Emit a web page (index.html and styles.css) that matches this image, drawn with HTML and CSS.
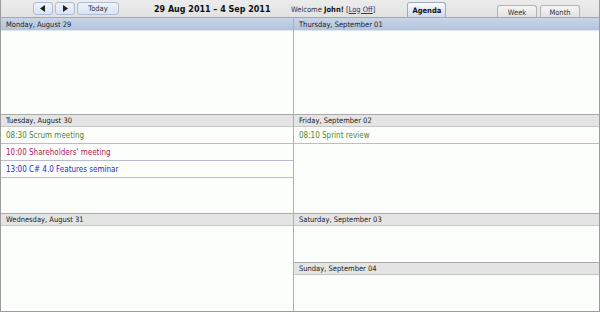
FILE: index.html
```html
<!DOCTYPE html>
<html>
<head>
<meta charset="utf-8">
<link rel="stylesheet" href="styles.css">
</head>
<body>
<div class="cal">
  <div class="toolbar">
    <div class="navs">
      <span class="btn arrow"><svg width="6" height="7" viewBox="0 0 6 7"><path d="M5 0 L0 3.5 L5 7 Z" fill="#222"/></svg></span>
      <span class="btn arrow"><svg width="6" height="7" viewBox="0 0 6 7"><path d="M1 0 L6 3.5 L1 7 Z" fill="#222"/></svg></span>
      <span class="btn today">Today</span>
    </div>
    <div class="range">29 Aug 2011 – 4 Sep 2011</div>
    <div class="welcome">Welcome <b>John!</b> [<a href="#">Log Off</a>]</div>
    <div class="tab active">Agenda</div>
    <div class="views">
      <div class="tab">Week</div>
      <div class="tab">Month</div>
    </div>
  </div>
  <div class="grid">
    <div class="day left first">
      <div class="dh blue">Monday, August 29</div>
    </div>
    <div class="day first">
      <div class="dh blue">Thursday, September 01</div>
    </div>
    <div class="day left">
      <div class="dh">Tuesday, August 30</div>
      <div class="ev green">08:30 Scrum meeting</div>
      <div class="ev red">10:00 Shareholders' meeting</div>
      <div class="ev blue-t">13:00 C# 4.0 Features seminar</div>
    </div>
    <div class="day">
      <div class="dh">Friday, September 02</div>
      <div class="ev green">08:10 Sprint review</div>
    </div>
    <div class="day left">
      <div class="dh">Wednesday, August 31</div>
    </div>
    <div class="stack">
      <div class="day half">
        <div class="dh">Saturday, September 03</div>
      </div>
      <div class="day half">
        <div class="dh">Sunday, September 04</div>
      </div>
    </div>
  </div>
</div>
</body>
</html>
```

FILE: styles.css
```css
* { box-sizing: border-box; }
html, body { margin: 0; padding: 0; background: #fff; }
body {
  font-family: "DejaVu Sans Condensed", "DejaVu Sans", sans-serif;
  font-size: 7.5px;
  color: #222;
}
.cal {
  width: 600px;
  height: 312px;
  border: 1px solid #9c9c9c;
  border-top: none;
  display: flex;
  flex-direction: column;
  background: #fcfefc;
}
.toolbar {
  height: 17px;
  flex: none;
  background: linear-gradient(#ececec, #e2e2e2);
  display: flex;
  align-items: flex-end;
}
.navs {
  display: flex;
  gap: 2px;
  margin-left: 32px;
  align-self: flex-start;
  margin-top: 2px;
}
.btn {
  height: 13px;
  border: 1px solid #aebbd0;
  border-radius: 3px;
  background: linear-gradient(#eef3fb, #d8e3f4);
  display: flex;
  align-items: center;
  justify-content: center;
  color: #333;
}
.arrow { width: 20px; }
.today { width: 42px; font-size: 7.5px; }
.range {
  align-self: center;
  margin-left: 35px;
  font-weight: bold;
  font-size: 8px;
  font-family: "DejaVu Sans", sans-serif;
  color: #111;
  width: 137px;
  padding-top: 1px;
}
.welcome {
  align-self: center;
  color: #333;
  padding-top: 1px;
}
.welcome b { color: #111; }
.welcome a { color: #3a2a8c; }
.tab {
  height: 13px;
  border: 1px solid #b4b4b4;
  border-bottom: none;
  border-radius: 3px 3px 0 0;
  background: linear-gradient(#f6f6f6, #e2e2e2);
  display: flex;
  align-items: center;
  justify-content: center;
  color: #333;
  padding-top: 1px;
}
.tab.active {
  height: 15px;
  width: 39px;
  margin-left: 32px;
  font-weight: bold;
  color: #111;
  background: linear-gradient(#fafbfd, #cfdbec);
  border-color: #9eaac0;
}
.views {
  margin-left: auto;
  margin-right: 19px;
  display: flex;
  gap: 3px;
}
.views .tab { width: 40px; height: 12px; }
.grid {
  flex: 1;
  display: grid;
  grid-template-columns: 293px 1fr;
  grid-template-rows: 97px 99px 1fr;
}
.day {
  display: flex;
  flex-direction: column;
}
.left { border-right: 1px solid #b0b0b0; }
.stack { display: flex; flex-direction: column; }
.half { flex: 1; }
.dh {
  height: 13px;
  flex: none;
  background: #e4e4e4;
  border-top: 1px solid #a9a9a9;
  border-bottom: 1px solid #c6c6c6;
  padding-left: 5px;
  display: flex;
  align-items: center;
  color: #222;
}
.dh.blue {
  border-top: 1px solid #9aa8bf;
  border-bottom: 1px solid #dfe6f1;
  background: linear-gradient(#c9d5e8, #b2c3dd);
  height: 14px;
}
.ev {
  height: 17px;
  flex: none;
  border-bottom: 1px solid #b9bccc;
  padding-left: 5px;
  display: flex;
  align-items: center;
  font-size: 8px;
  padding-top: 1px;
}
.green { color: #4f8a1f; }
.red { color: #b3204f; }
.blue-t { color: #2626e0; }
```
